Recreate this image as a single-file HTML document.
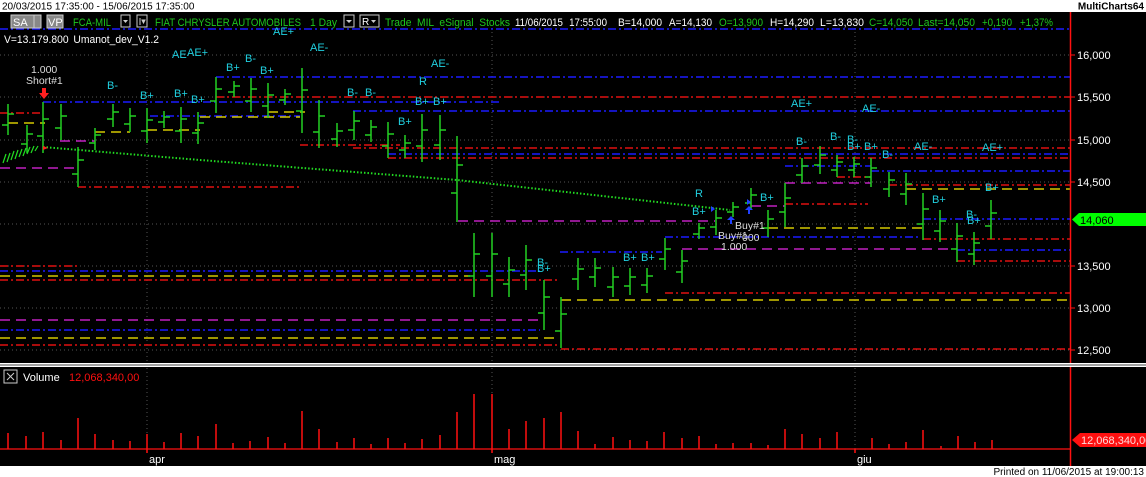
<!DOCTYPE html>
<html><head><meta charset="utf-8"><style>
html,body{margin:0;padding:0;background:#000;}
body{width:1146px;height:477px;overflow:hidden;position:relative;font-family:"Liberation Sans",Arial,sans-serif;}
svg{position:absolute;left:0;top:0;}
</style></head><body>
<svg width="1146" height="477" viewBox="0 0 1146 477" font-family="Liberation Sans, Arial, sans-serif">
<rect x="0" y="0" width="1146" height="477" fill="#000"/>
<rect x="0" y="0" width="1146" height="12" fill="#fff"/>
<text x="2" y="9.5" font-size="10" fill="#000">20/03/2015 17:35:00 - 15/06/2015 17:35:00</text>
<text x="1144" y="9.5" font-size="10" fill="#000" font-weight="bold" text-anchor="end">MultiCharts64</text>
<rect x="0" y="466" width="1146" height="11" fill="#fff"/>
<text x="1144" y="475" font-size="10" fill="#000" text-anchor="end">Printed on 11/06/2015 at 19:00:13</text>

<!-- grid -->
<g stroke="#555" stroke-width="1" stroke-dasharray="1 3">
<line x1="0" y1="55" x2="1070" y2="55"/><line x1="0" y1="97" x2="1070" y2="97"/><line x1="0" y1="140" x2="1070" y2="140"/><line x1="0" y1="182" x2="1070" y2="182"/><line x1="0" y1="224" x2="1070" y2="224"/><line x1="0" y1="266" x2="1070" y2="266"/><line x1="0" y1="308" x2="1070" y2="308"/><line x1="0" y1="350" x2="1070" y2="350"/>
<line x1="147" y1="28" x2="147" y2="362"/><line x1="492" y1="28" x2="492" y2="362"/><line x1="855" y1="28" x2="855" y2="362"/>
<line x1="147" y1="368" x2="147" y2="449"/><line x1="492" y1="368" x2="492" y2="449"/><line x1="855" y1="368" x2="855" y2="449"/>
</g>

<!-- level lines -->
<g stroke-width="1.5" fill="none">
<g stroke="#1a1aff" stroke-dasharray="8 3 2 3">
<line x1="0" y1="29" x2="1070" y2="29"/><line x1="43" y1="102" x2="500" y2="102"/><line x1="216" y1="77" x2="1070" y2="77"/><line x1="353" y1="111" x2="1070" y2="111"/><line x1="388" y1="154" x2="1070" y2="154"/><line x1="0" y1="271" x2="540" y2="271"/><line x1="0" y1="330" x2="540" y2="330"/><line x1="560" y1="252" x2="662" y2="252"/><line x1="665" y1="237" x2="920" y2="237"/><line x1="785" y1="166" x2="871" y2="166"/><line x1="871" y1="171" x2="1070" y2="171"/><line x1="923" y1="219" x2="1070" y2="219"/><line x1="957" y1="250" x2="1070" y2="250"/><line x1="150" y1="116" x2="300" y2="116"/>
</g>
<g stroke="#e01010" stroke-dasharray="8 3 2 3">
<line x1="0" y1="113" x2="40" y2="113"/><line x1="216" y1="97" x2="1070" y2="97"/><line x1="353" y1="148" x2="1070" y2="148"/><line x1="388" y1="158" x2="1070" y2="158"/><line x1="78" y1="187" x2="300" y2="187"/><line x1="0" y1="266" x2="78" y2="266"/><line x1="0" y1="280" x2="560" y2="280"/><line x1="0" y1="345" x2="560" y2="345"/><line x1="665" y1="293" x2="1070" y2="293"/><line x1="561" y1="349" x2="1070" y2="349"/><line x1="785" y1="204" x2="868" y2="204"/><line x1="837" y1="177" x2="871" y2="177"/><line x1="889" y1="185" x2="1070" y2="185"/><line x1="923" y1="239" x2="1070" y2="239"/><line x1="957" y1="261" x2="1070" y2="261"/><line x1="300" y1="145" x2="400" y2="145"/>
</g>
<g stroke="#d4c800" stroke-dasharray="10 6">
<line x1="8" y1="123" x2="45" y2="123"/><line x1="95" y1="132" x2="130" y2="132"/><line x1="147" y1="130" x2="200" y2="130"/><line x1="200" y1="117" x2="300" y2="117"/><line x1="0" y1="276" x2="470" y2="276"/><line x1="0" y1="338" x2="560" y2="338"/><line x1="561" y1="300" x2="1070" y2="300"/><line x1="768" y1="228" x2="923" y2="228"/><line x1="906" y1="189" x2="1070" y2="189"/><line x1="268" y1="112" x2="305" y2="112"/>
</g>
<g stroke="#c020c0" stroke-dasharray="10 6">
<line x1="0" y1="168" x2="78" y2="168"/><line x1="60" y1="141" x2="95" y2="141"/><line x1="0" y1="320" x2="540" y2="320"/><line x1="458" y1="221" x2="715" y2="221"/><line x1="682" y1="249" x2="950" y2="249"/><line x1="785" y1="183" x2="871" y2="183"/><line x1="751" y1="206" x2="785" y2="206"/>
</g>
</g>

<!-- MA dotted -->
<polyline points="43,147 200,160 457,180 730,210" fill="none" stroke="#22dd22" stroke-width="2" stroke-dasharray="1.5 2"/>
<g stroke="#22dd22" stroke-width="1.2">
<line x1="3" y1="163" x2="6" y2="154"/><line x1="7" y1="162" x2="10" y2="153"/><line x1="11" y1="160" x2="14" y2="151"/><line x1="15" y1="159" x2="18" y2="150"/><line x1="19" y1="157" x2="22" y2="149"/><line x1="23" y1="156" x2="26" y2="148"/><line x1="27" y1="154" x2="30" y2="147"/><line x1="31" y1="153" x2="34" y2="146"/><line x1="35" y1="151" x2="38" y2="146"/>
</g>

<!-- price bars -->
<path fill="none" stroke="#22d022" stroke-width="1.5" d="
M8 104V135M2 125H8M8 114H14
M27 125V153M21 144H27M27 134H33
M43 102V153M37 136H43M43 119H49
M61 104V140M55 128H61M61 116H67
M78 147V187M72 174H78M78 160H84
M95 128V150M89 143H95M95 135H101
M113 104V127M107 119H113M113 112H119
M130 108V132M124 124H130M130 116H136
M147 108V143M141 131H147M147 120H153
M164 111V128M158 122H164M164 117H170
M181 107V143M175 131H181M181 119H187
M198 112V144M192 133H198M198 123H204
M216 77V113M210 101H216M216 89H222
M234 81V97M228 92H234M234 86H240
M251 78V112M245 101H251M251 89H257
M268 83V118M262 106H268M268 95H274
M285 89V105M279 100H285M285 94H291
M302 68V133M296 111H302M302 90H308
M319 100V148M313 132H319M319 116H325
M337 123V147M331 139H337M337 131H343
M354 111V140M348 130H354M354 121H360
M371 120V142M365 135H371M371 127H377
M388 122V158M382 146H388M388 134H394
M405 135V158M399 150H405M405 143H411
M422 114V162M416 146H422M422 130H428
M440 115V160M434 145H440M440 130H446
M457 136V222M451 193H457M457 165H463
M474 233V297M468 276H474M474 254H480
M492 233V297M486 276H492M492 254H498
M509 257V297M503 284H509M509 270H515
M526 245V290M520 275H526M526 260H532
M544 280V330M538 313H544M544 297H550
M561 297V348M555 331H561M561 314H567
M578 258V290M572 279H578M578 269H584
M595 258V287M589 277H595M595 268H601
M613 267V297M607 287H613M613 277H619
M630 268V295M624 286H630M630 277H636
M647 268V293M641 285H647M647 276H653
M665 238V270M659 259H665M665 249H671
M682 250V283M676 272H682M682 261H688
M699 223V239M693 234H699M699 228H705
M716 210V235M710 227H716M716 218H722
M733 202V217M727 212H733M733 207H739
M751 188V210M745 203H751M751 195H757
M768 210V237M762 228H768M768 219H774
M785 183V227M779 212H785M785 198H791
M802 158V183M796 175H802M802 166H808
M820 146V174M814 165H820M820 155H826
M837 155V177M831 170H837M837 162H843
M854 157V177M848 170H854M854 164H860
M871 158V187M865 177H871M871 168H877
M889 172V197M883 189H889M889 180H895
M906 173V205M900 194H906M906 184H912
M923 193V240M917 224H923M923 209H929
M940 210V242M934 231H940M940 221H946
M957 223V262M951 249H957M957 236H963
M974 232V265M968 254H974M974 243H980
M991 200V239M985 226H991M991 213H997"/>

<!-- signals -->
<g font-size="11" fill="#20d0e0">
<text x="273" y="35">AE+</text><text x="310" y="51">AE-</text><text x="172" y="58">AE</text><text x="187" y="56">AE+</text>
<text x="245" y="62">B-</text><text x="226" y="71">B+</text><text x="260" y="74">B+</text><text x="107" y="89">B-</text>
<text x="140" y="99">B+</text><text x="174" y="97">B+</text><text x="191" y="103">B+</text><text x="398" y="125">B+</text>
<text x="347" y="96">B-</text><text x="365" y="96">B-</text><text x="419" y="85">R</text><text x="415" y="105">B+</text>
<text x="433" y="105">B+</text><text x="431" y="67">AE-</text><text x="791" y="107">AE+</text><text x="862" y="112">AE-</text>
<text x="796" y="145">B-</text><text x="830" y="140">B-</text><text x="847" y="143">B-</text><text x="847" y="150">B+</text>
<text x="864" y="150">B+</text><text x="882" y="158">B-</text><text x="914" y="150">AE-</text><text x="982" y="151">AE+</text>
<text x="985" y="191">B+</text><text x="932" y="203">B+</text><text x="966" y="218">B-</text><text x="967" y="224">B+</text>
<text x="760" y="201">B+</text><text x="695" y="197">R</text><text x="692" y="215">B+</text><text x="623" y="261">B+</text>
<text x="641" y="261">B+</text><text x="537" y="266">B-</text><text x="537" y="272">B+</text>
</g>
<g font-size="10.5" fill="#ddd">
<text x="31" y="73">1.000</text><text x="26" y="84">Short#1</text>
<text x="735" y="229">Buy#1</text><text x="718" y="239">Buy#1</text><text x="742" y="241">000</text><text x="721" y="250">1.000</text>
</g>
<path d="M42 88h4v5h3l-5 6-5-6h3z" fill="#ff2020"/>
<path d="M43 146l5 2-5 2z" fill="#ff2020"/>
<path d="M731 216l-4 4h3v4h2v-4h3z" fill="#2040ff"/>
<path d="M749 206l-4 4h3v4h2v-4h3z" fill="#2040ff"/>
<path d="M711 206l4 3-4 3z M747 199l4 3-4 3z" fill="#2040ff"/>

<!-- header bar -->
<rect x="11" y="15" width="23" height="13" fill="#888" stroke="#ccc" stroke-width="1"/>
<text x="13" y="26" font-size="11" fill="#fff">SA</text>
<rect x="34" y="15" width="7" height="13" fill="#888" stroke="#ccc"/>
<rect x="47" y="15" width="16" height="13" fill="#888" stroke="#ccc"/>
<text x="48" y="26" font-size="11" fill="#fff">VP</text>
<g font-size="11" lengthAdjust="spacingAndGlyphs">
<text x="73" y="26" fill="#1ec81e" textLength="38" lengthAdjust="spacingAndGlyphs">FCA-MIL</text>
<text x="155" y="26" fill="#1ec81e" textLength="146" lengthAdjust="spacingAndGlyphs">FIAT CHRYSLER AUTOMOBILES</text>
<text x="310" y="26" fill="#1ec81e" textLength="27" lengthAdjust="spacingAndGlyphs">1 Day</text>
<text x="385" y="26" fill="#1ec81e" textLength="125" lengthAdjust="spacingAndGlyphs" word-spacing="3">Trade MIL eSignal Stocks</text>
<text x="515" y="26" fill="#fff" textLength="92" lengthAdjust="spacingAndGlyphs" word-spacing="4">11/06/2015 17:55:00</text>
<text x="618" y="26" fill="#fff" textLength="44" lengthAdjust="spacingAndGlyphs">B=14,000</text>
<text x="669" y="26" fill="#fff" textLength="43" lengthAdjust="spacingAndGlyphs">A=14,130</text>
<text x="719" y="26" fill="#1ec81e" textLength="44" lengthAdjust="spacingAndGlyphs">O=13,900</text>
<text x="770" y="26" fill="#fff" textLength="44" lengthAdjust="spacingAndGlyphs">H=14,290</text>
<text x="820" y="26" fill="#fff" textLength="44" lengthAdjust="spacingAndGlyphs">L=13,830</text>
<text x="869" y="26" fill="#1ec81e" textLength="44" lengthAdjust="spacingAndGlyphs">C=14,050</text>
<text x="918" y="26" fill="#1ec81e" textLength="57" lengthAdjust="spacingAndGlyphs">Last=14,050</text>
<text x="982" y="26" fill="#1ec81e" textLength="30" lengthAdjust="spacingAndGlyphs">+0,190</text>
<text x="1020" y="26" fill="#1ec81e" textLength="33" lengthAdjust="spacingAndGlyphs">+1,37%</text>
<text x="4" y="43" fill="#fff" textLength="155" lengthAdjust="spacingAndGlyphs" word-spacing="2">V=13.179.800 Umanot_dev_V1.2</text>
</g>
<rect x="121" y="15" width="9" height="12" fill="#000" stroke="#ccc"/><path d="M123 20h5l-2.5 3z" fill="#ccc"/>
<rect x="137" y="15" width="10" height="12" fill="#000" stroke="#ccc"/><path d="M140 18v7M142 20h3l-1.5 3z" stroke="#ccc" fill="#ccc"/>
<rect x="344" y="15" width="10" height="12" fill="#000" stroke="#ccc"/><path d="M346 20h6l-3 3z" fill="#ccc"/>
<rect x="360" y="15" width="19" height="12" fill="#000" stroke="#ccc"/><text x="362" y="25" font-size="10" fill="#fff">R</text><path d="M371 20h5l-2.5 3z" fill="#ccc"/>

<!-- right axis -->
<line x1="1070.5" y1="12" x2="1070.5" y2="466" stroke="#ff1010" stroke-width="1.5"/>
<g font-size="11" fill="#fff">
<text x="1077" y="59">16,000</text><text x="1077" y="101">15,500</text><text x="1077" y="144">15,000</text><text x="1077" y="186">14,500</text><text x="1077" y="270">13,500</text><text x="1077" y="312">13,000</text><text x="1077" y="354">12,500</text>
</g>
<g stroke="#ff1010"><line x1="1070" y1="55" x2="1075" y2="55"/><line x1="1070" y1="97" x2="1075" y2="97"/><line x1="1070" y1="140" x2="1075" y2="140"/><line x1="1070" y1="182" x2="1075" y2="182"/><line x1="1070" y1="266" x2="1075" y2="266"/><line x1="1070" y1="308" x2="1075" y2="308"/><line x1="1070" y1="350" x2="1075" y2="350"/></g>
<path d="M1072 219.5L1079 213H1146V226H1079Z" fill="#00ff00"/>
<text x="1080" y="224" font-size="11" fill="#000">14,060</text>

<!-- separator -->
<rect x="0" y="363" width="1146" height="4" fill="#fff"/>
<rect x="0" y="364.5" width="1146" height="1" fill="#444"/>

<!-- volume panel -->
<rect x="4" y="370" width="13" height="13" fill="none" stroke="#ccc"/>
<path d="M7 373l7 7M14 373l-7 7" stroke="#ccc"/>
<text x="23" y="381" font-size="11" fill="#fff">Volume</text>
<text x="69" y="381" font-size="11" fill="#ff1010">12,068,340,00</text>
<line x1="0" y1="449" x2="1070" y2="449" stroke="#ff1010" stroke-width="1.2"/>
<path fill="none" stroke="#ff1010" stroke-width="1.5" d="
M8 449V433M26 449V436M43 449V432M61 449V440M78 449V418M95 449V434M113 449V440M130 449V441M147 449V434M164 449V442M181 449V433M198 449V436M216 449V424M233 449V443M250 449V441M268 449V437M285 449V443M302 449V411M319 449V429M337 449V442M354 449V438M371 449V444M388 449V438M405 449V443M422 449V439M440 449V435M457 449V412M474 449V394M492 449V394M509 449V429M526 449V421M544 449V418M561 449V412M578 449V431M595 449V444
M613 449V437M630 449V440M647 449V441M664 449V432M682 449V438M699 449V436M716 449V444M733 449V443M751 449V443M768 449V445M785 449V429M802 449V434M820 449V438M837 449V432M872 449V438M889 449V444M906 449V442M923 449V430M941 449V446M958 449V436M975 449V442M992 449V440
M147 449V453M492 449V453M855 449V453"/>
<path d="M1072 440L1080 433H1146V447H1080Z" fill="#ff1010"/>
<text x="1081" y="444" font-size="11" fill="#fff" opacity="0.85">12,068,340,00</text>
<g font-size="11" fill="#fff"><text x="149" y="463">apr</text><text x="494" y="463">mag</text><text x="857" y="463">giu</text></g>
</svg>
</body></html>
